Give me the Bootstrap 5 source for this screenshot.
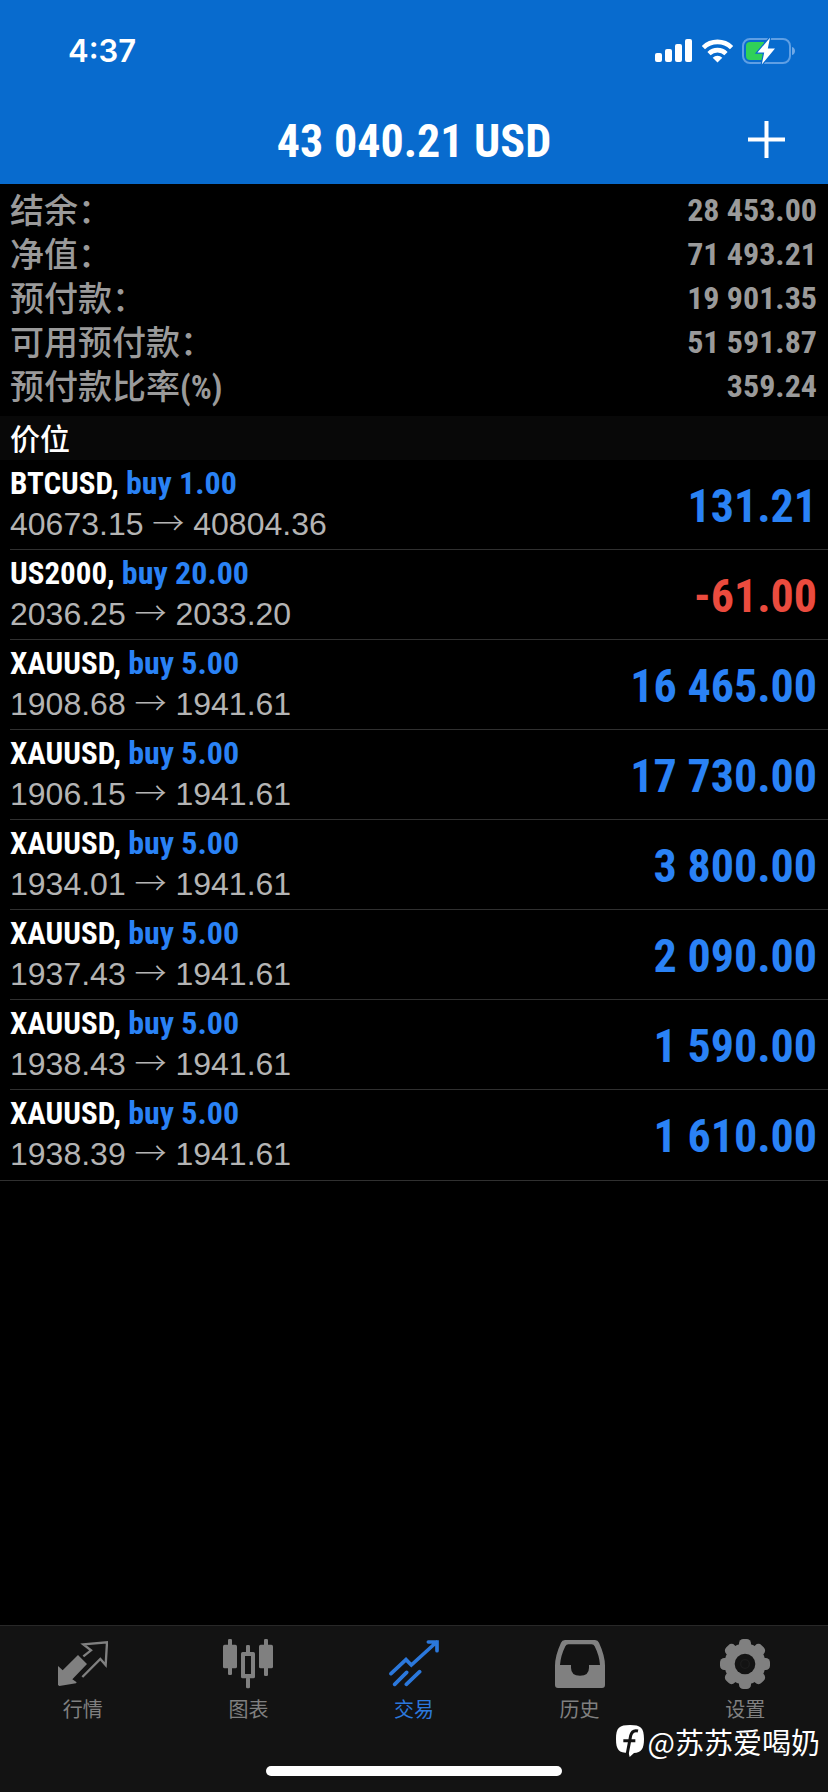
<!DOCTYPE html>
<html lang="zh-CN">
<head>
<meta charset="utf-8">
<meta name="viewport" content="width=device-width, initial-scale=1">
<title>交易</title>
<link href="https://cdn.jsdelivr.net/npm/bootstrap@5.3.0/dist/css/bootstrap.min.css" rel="stylesheet">
<style>
  :root {
    --narrow: "Roboto Condensed", "Liberation Sans", "Noto Sans CJK SC", sans-serif;
    --up: #2a82f5;
    --down: #eb4b3e;
  }
  body { background: #000; color: #fff; font-family: "Liberation Sans", "Noto Sans CJK SC", sans-serif; }
  svg { display: block; flex: none; }

  .app-top { background: #086bce; height: 184px; }
  .status-row { height: 98px; padding: 4px 32px 0 68px; }
  .clock { font: 600 31px/40px Inter, sans-serif; }
  .title-row { grid-template-columns: 1fr auto 1fr; height: 86px; padding: 0 43px; }
  .title-row h1 { font: 700 46px/56px var(--narrow); grid-column: 2; }
  .add-btn { color: #fff; justify-self: end; }

  .summary { padding: 4px 11px 8px 10px; }
  .summary dt { font: 500 34px/42px "Noto Sans CJK SC", sans-serif; color: #9a9a9a; height: 44px; }
  .unit { font: 700 33px/28px var(--narrow); }
  .summary dd { font: 700 32px/44px var(--narrow); color: #9a9a9a; }

  .section-title { background: #080808; font: 500 30px/42px "Noto Sans CJK SC", sans-serif; padding: 0 10px 2px; }

  .positions li { padding-left: 10px; }
  .positions li:last-child { padding-left: 0; border-bottom: 1px solid #303030; }
  .positions li:last-child .position { padding-left: 10px; border-bottom: 0; }
  .position { height: 90px; padding: 0 11px 2px 0; border-bottom: 1px solid #303030; }
  .symbol { font: 700 31px/40px var(--narrow); }
  .side { font-size: 32px; line-height: 32px; color: var(--up); }
  .prices { font: 400 32px/40px "Liberation Sans", sans-serif; color: #b4b4b4; }
  .arrow { font-family: "Noto Sans CJK SC", sans-serif; font-weight: 300; line-height: 1; }
  .profit { font: 700 46px/56px var(--narrow); color: var(--up); padding-top: 4px; }
  .loss { color: var(--down); }

  .app-tabs { background: #131313; border-top: 1px solid #282828; height: 167px; }
  .tab-item { color: #808080; font: 400 20px/28px "Noto Sans CJK SC", sans-serif; padding-top: 13px; gap: 6px; }
  .tab-item.active { color: #2b78dc; }
  .home-bar { width: 296px; height: 10px; bottom: 16px; background: #fff; }
  .watermark { right: 8px; bottom: 31px; font: 400 29px/40px "Noto Sans CJK SC", sans-serif; gap: 4px; }
</style>
</head>
<body>
<div class="d-flex flex-column min-vh-100">

  <header class="app-top">
    <div class="status-row d-flex align-items-center justify-content-between">
      <span class="clock">4:37</span>
      <div class="d-flex align-items-center gap-2">
        <svg width="38" height="24" viewBox="0 0 38 24" fill="#fff" aria-hidden="true">
          <rect x="0" y="14" width="7" height="9" rx="2"/><rect x="10" y="10" width="7" height="13" rx="2"/>
          <rect x="20" y="5" width="7" height="18" rx="2"/><rect x="30" y="0" width="7" height="23" rx="2"/>
        </svg>
        <svg width="33" height="24" viewBox="0 0 33 24" aria-hidden="true">
          <g fill="none" stroke="#fff" stroke-width="4.6"><path d="M2.4 8.6a20.2 20.2 0 0 1 28.2 0"/><path d="M8 14.6a12.2 12.2 0 0 1 17 0"/></g>
          <path fill="#fff" d="M16.5 23.6l-4.8-4.9a7 7 0 0 1 9.6 0z"/>
        </svg>
        <svg width="54" height="28" viewBox="0 0 54 28" aria-hidden="true">
          <rect x="1" y="2" width="47" height="24" rx="7" fill="none" stroke="#5f9fe4" stroke-width="2"/>
          <path fill="#6fa8e6" d="M50 10c4 1 4 7 0 8z"/>
          <path fill="#30d158" d="M8 5h14v18H8a4 4 0 0 1-4-4V9a4 4 0 0 1 4-4z"/>
          <path fill="#fff" stroke="#086bce" stroke-width="2.4" paint-order="stroke" d="M28 0.8L15.400 15.600h6.800L19.800 27.400 33 11.600h-7.200z"/>
        </svg>
      </div>
    </div>
    <div class="title-row d-grid align-items-center">
      <h1 class="m-0">43 040.21 USD</h1>
      <button type="button" class="add-btn btn p-0 pb-1 border-0" aria-label="新订单">
        <svg width="37" height="37" viewBox="0 0 37 37" stroke="#fff" stroke-width="4"><path d="M18.500 0v37M0 18.500h37"/></svg>
      </button>
    </div>
  </header>

  <main class="flex-grow-1">
    <dl class="summary m-0">
      <div class="d-flex justify-content-between"><dt>结余：</dt><dd class="m-0">28 453.00</dd></div>
      <div class="d-flex justify-content-between"><dt>净值：</dt><dd class="m-0">71 493.21</dd></div>
      <div class="d-flex justify-content-between"><dt>预付款：</dt><dd class="m-0">19 901.35</dd></div>
      <div class="d-flex justify-content-between"><dt>可用预付款：</dt><dd class="m-0">51 591.87</dd></div>
      <div class="d-flex justify-content-between"><dt>预付款比率<span class="unit">(%)</span></dt><dd class="m-0">359.24</dd></div>
    </dl>

    <h2 class="section-title m-0">价位</h2>

    <ul class="positions list-unstyled m-0">
      <li><div class="position d-flex align-items-center justify-content-between">
        <div><div class="symbol">BTCUSD, <span class="side">buy 1.00</span></div><div class="prices">40673.15 <span class="arrow">→</span> 40804.36</div></div>
        <div class="profit">131.21</div></div></li>
      <li><div class="position d-flex align-items-center justify-content-between">
        <div><div class="symbol">US2000, <span class="side">buy 20.00</span></div><div class="prices">2036.25 <span class="arrow">→</span> 2033.20</div></div>
        <div class="profit loss">-61.00</div></div></li>
      <li><div class="position d-flex align-items-center justify-content-between">
        <div><div class="symbol">XAUUSD, <span class="side">buy 5.00</span></div><div class="prices">1908.68 <span class="arrow">→</span> 1941.61</div></div>
        <div class="profit">16 465.00</div></div></li>
      <li><div class="position d-flex align-items-center justify-content-between">
        <div><div class="symbol">XAUUSD, <span class="side">buy 5.00</span></div><div class="prices">1906.15 <span class="arrow">→</span> 1941.61</div></div>
        <div class="profit">17 730.00</div></div></li>
      <li><div class="position d-flex align-items-center justify-content-between">
        <div><div class="symbol">XAUUSD, <span class="side">buy 5.00</span></div><div class="prices">1934.01 <span class="arrow">→</span> 1941.61</div></div>
        <div class="profit">3 800.00</div></div></li>
      <li><div class="position d-flex align-items-center justify-content-between">
        <div><div class="symbol">XAUUSD, <span class="side">buy 5.00</span></div><div class="prices">1937.43 <span class="arrow">→</span> 1941.61</div></div>
        <div class="profit">2 090.00</div></div></li>
      <li><div class="position d-flex align-items-center justify-content-between">
        <div><div class="symbol">XAUUSD, <span class="side">buy 5.00</span></div><div class="prices">1938.43 <span class="arrow">→</span> 1941.61</div></div>
        <div class="profit">1 590.00</div></div></li>
      <li><div class="position d-flex align-items-center justify-content-between">
        <div><div class="symbol">XAUUSD, <span class="side">buy 5.00</span></div><div class="prices">1938.39 <span class="arrow">→</span> 1941.61</div></div>
        <div class="profit">1 610.00</div></div></li>
    </ul>
  </main>

  <footer class="app-tabs position-relative">
    <nav class="row g-0" aria-label="主导航">
      <a href="#quotes" class="tab-item col d-flex flex-column align-items-center text-decoration-none">
        <svg width="50" height="50" viewBox="0 0 150 150" aria-hidden="true">
          <path fill="currentColor" d="M0 81l14 13 46-46 27 27-44 46 13 9-2 3-50 8-4-3z"/>
          <path fill="none" stroke="currentColor" stroke-width="7" d="M76 52l23-18-23-18 71-6-4 68-16-18-54 54"/>
        </svg>行情</a>
      <a href="#charts" class="tab-item col d-flex flex-column align-items-center text-decoration-none">
        <svg width="50" height="50" viewBox="0 0 150 150" fill="currentColor" aria-hidden="true">
          <rect x="0" y="17" width="42" height="71" rx="5"/><rect x="15" y="0" width="12" height="108" rx="4"/>
          <rect x="108" y="17" width="42" height="71" rx="5"/><rect x="123" y="0" width="12" height="111" rx="4"/>
          <path fill-rule="evenodd" d="M59 39h32a5 5 0 0 1 5 5v69a5 5 0 0 1-5 5H59a5 5 0 0 1-5-5V44a5 5 0 0 1 5-5zm7 12v54h18V51z"/>
          <rect x="69" y="18" width="12" height="24" rx="4"/><rect x="69" y="115" width="12" height="33" rx="4"/>
        </svg>图表</a>
      <a href="#trade" class="tab-item active col d-flex flex-column align-items-center text-decoration-none" aria-current="page">
        <svg width="50" height="50" viewBox="0 0 150 150" fill="none" stroke="currentColor" stroke-width="11" stroke-linecap="round" aria-hidden="true">
          <path d="M6 104l45-42 16 16 76-69M118 9h26v26M17 136l36-36M52 136l40-38"/>
        </svg>交易</a>
      <a href="#history" class="tab-item col d-flex flex-column align-items-center text-decoration-none">
        <svg width="50" height="50" viewBox="0 0 150 150" fill="currentColor" aria-hidden="true">
          <path fill-rule="evenodd" d="M30 3h90q9 0 12 8Q150 50 150 80v58q0 9-9 9H9q-9 0-9-9V80Q0 50 18 11q3-8 12-8zm10 13q-6 0-9 6Q17 50 15 78h33v8q0 24 27 24t27-24v-8h33q-2-28-16-56-3-6-9-6z"/>
        </svg>历史</a>
      <a href="#settings" class="tab-item col d-flex flex-column align-items-center text-decoration-none">
        <svg width="50" height="50" viewBox="0 0 150 150" aria-hidden="true">
          <g fill="currentColor"><circle cx="75" cy="75" r="62"/>
          <rect x="57" y="0" width="36" height="150" rx="13"/>
          <rect x="57" y="0" width="36" height="150" rx="13" transform="rotate(45 75 75)"/>
          <rect x="57" y="0" width="36" height="150" rx="13" transform="rotate(90 75 75)"/>
          <rect x="57" y="0" width="36" height="150" rx="13" transform="rotate(135 75 75)"/></g>
          <circle cx="75" cy="75" r="31" fill="#131313"/><circle cx="75" cy="75" r="13" fill="none" stroke="#1c1c1c" stroke-width="4"/>
        </svg>设置</a>
    </nav>
    <div class="home-bar position-absolute start-50 translate-middle-x rounded-pill"></div>
    <div class="watermark position-absolute d-flex align-items-center">
      <svg width="28" height="32" viewBox="0 0 84 96" aria-hidden="true">
        <path fill="#fff" d="M42 0c32 0 42 8 42 42 0 30-8 41-30 42L41 96l-3-12C8 84 0 74 0 42 0 8 10 0 42 0z"/>
        <path fill="none" stroke="#131313" stroke-width="9" d="M66 18c-12-3-19 2-22 14L33 90M22 47h36"/>
      </svg>
      <span>@苏苏爱喝奶</span>
    </div>
  </footer>
</div>
<script src="https://cdn.jsdelivr.net/npm/bootstrap@5.3.0/dist/js/bootstrap.bundle.min.js"></script>
</body>
</html>
